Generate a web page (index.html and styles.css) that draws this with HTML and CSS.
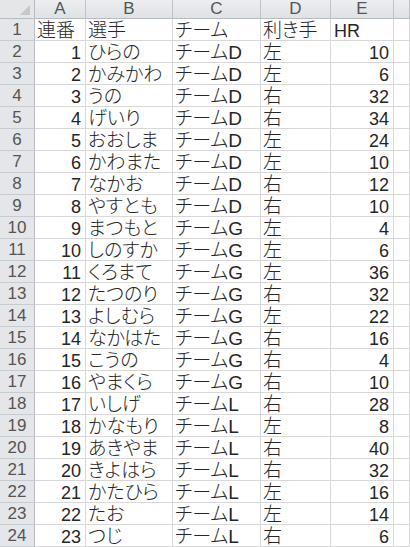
FILE: index.html
```html
<!DOCTYPE html>
<html lang="ja">
<head>
<meta charset="utf-8">
<link rel="stylesheet" href="styles.css">
</head>
<body>
<div class="sheet">
  <div class="row head">
    <div class="corner"><span class="tri"></span></div>
    <div class="ch">A</div><div class="ch">B</div><div class="ch">C</div><div class="ch">D</div><div class="ch">E</div><div class="ch"></div>
  </div>
  <div class="row"><div class="rh">1</div><div class="c">連番</div><div class="c">選手</div><div class="c">チーム</div><div class="c">利き手</div><div class="c latin">HR</div><div class="c"></div></div>
  <div class="row"><div class="rh">2</div><div class="c n">1</div><div class="c">ひらの</div><div class="c">チームD</div><div class="c">左</div><div class="c n">10</div><div class="c"></div></div>
  <div class="row"><div class="rh">3</div><div class="c n">2</div><div class="c">かみかわ</div><div class="c">チームD</div><div class="c">左</div><div class="c n">6</div><div class="c"></div></div>
  <div class="row"><div class="rh">4</div><div class="c n">3</div><div class="c">うの</div><div class="c">チームD</div><div class="c">右</div><div class="c n">32</div><div class="c"></div></div>
  <div class="row"><div class="rh">5</div><div class="c n">4</div><div class="c">げいり</div><div class="c">チームD</div><div class="c">右</div><div class="c n">34</div><div class="c"></div></div>
  <div class="row"><div class="rh">6</div><div class="c n">5</div><div class="c">おおしま</div><div class="c">チームD</div><div class="c">左</div><div class="c n">24</div><div class="c"></div></div>
  <div class="row"><div class="rh">7</div><div class="c n">6</div><div class="c">かわまた</div><div class="c">チームD</div><div class="c">左</div><div class="c n">10</div><div class="c"></div></div>
  <div class="row"><div class="rh">8</div><div class="c n">7</div><div class="c">なかお</div><div class="c">チームD</div><div class="c">右</div><div class="c n">12</div><div class="c"></div></div>
  <div class="row"><div class="rh">9</div><div class="c n">8</div><div class="c">やすとも</div><div class="c">チームD</div><div class="c">右</div><div class="c n">10</div><div class="c"></div></div>
  <div class="row"><div class="rh">10</div><div class="c n">9</div><div class="c">まつもと</div><div class="c">チームG</div><div class="c">左</div><div class="c n">4</div><div class="c"></div></div>
  <div class="row"><div class="rh">11</div><div class="c n">10</div><div class="c">しのすか</div><div class="c">チームG</div><div class="c">左</div><div class="c n">6</div><div class="c"></div></div>
  <div class="row"><div class="rh">12</div><div class="c n">11</div><div class="c">くろまて</div><div class="c">チームG</div><div class="c">左</div><div class="c n">36</div><div class="c"></div></div>
  <div class="row"><div class="rh">13</div><div class="c n">12</div><div class="c">たつのり</div><div class="c">チームG</div><div class="c">右</div><div class="c n">32</div><div class="c"></div></div>
  <div class="row"><div class="rh">14</div><div class="c n">13</div><div class="c">よしむら</div><div class="c">チームG</div><div class="c">左</div><div class="c n">22</div><div class="c"></div></div>
  <div class="row"><div class="rh">15</div><div class="c n">14</div><div class="c">なかはた</div><div class="c">チームG</div><div class="c">右</div><div class="c n">16</div><div class="c"></div></div>
  <div class="row"><div class="rh">16</div><div class="c n">15</div><div class="c">こうの</div><div class="c">チームG</div><div class="c">右</div><div class="c n">4</div><div class="c"></div></div>
  <div class="row"><div class="rh">17</div><div class="c n">16</div><div class="c">やまくら</div><div class="c">チームG</div><div class="c">右</div><div class="c n">10</div><div class="c"></div></div>
  <div class="row"><div class="rh">18</div><div class="c n">17</div><div class="c">いしげ</div><div class="c">チームL</div><div class="c">右</div><div class="c n">28</div><div class="c"></div></div>
  <div class="row"><div class="rh">19</div><div class="c n">18</div><div class="c">かなもり</div><div class="c">チームL</div><div class="c">左</div><div class="c n">8</div><div class="c"></div></div>
  <div class="row"><div class="rh">20</div><div class="c n">19</div><div class="c">あきやま</div><div class="c">チームL</div><div class="c">右</div><div class="c n">40</div><div class="c"></div></div>
  <div class="row"><div class="rh">21</div><div class="c n">20</div><div class="c">きよはら</div><div class="c">チームL</div><div class="c">右</div><div class="c n">32</div><div class="c"></div></div>
  <div class="row"><div class="rh">22</div><div class="c n">21</div><div class="c">かたひら</div><div class="c">チームL</div><div class="c">左</div><div class="c n">16</div><div class="c"></div></div>
  <div class="row"><div class="rh">23</div><div class="c n">22</div><div class="c">たお</div><div class="c">チームL</div><div class="c">左</div><div class="c n">14</div><div class="c"></div></div>
  <div class="row"><div class="rh">24</div><div class="c n">23</div><div class="c">つじ</div><div class="c">チームL</div><div class="c">右</div><div class="c n">6</div><div class="c"></div></div>
</div>
</body>
</html>
```

FILE: styles.css
```css
html, body {
  margin: 0;
  padding: 0;
  background: #ffffff;
}
.sheet {
  width: 410px;
  overflow: hidden;
  font-family: "Liberation Sans", "Noto Sans CJK JP", sans-serif;
  font-feature-settings: "palt";
  font-weight: 300;
  color: #262626;
}
.row {
  display: grid;
  grid-template-columns: 35px 51px 87px 88px 70px 63px 1fr;
  height: 22px;
}
.row.head {
  height: 19px;
}
.row > div {
  box-sizing: border-box;
  border-right: 1px solid #d8d8d8;
  border-bottom: 1px solid #d8d8d8;
  overflow: hidden;
  white-space: nowrap;
}
.corner {
  position: relative;
  background: #e4e6e8;
  border-right: 1px solid #b8bcc0 !important;
  border-bottom: 1px solid #b8bcc0 !important;
}
.tri {
  position: absolute;
  right: 4px;
  bottom: 3px;
  width: 0;
  height: 0;
  border-left: 10px solid transparent;
  border-bottom: 10px solid #c4c8cc;
}
.ch {
  background: linear-gradient(#eceef0, #dfe2e5);
  border-right: 1px solid #bfc3c7 !important;
  border-bottom: 1px solid #b8bcc0 !important;
  color: #555;
  font-size: 17px;
  line-height: 18px;
  text-align: center;
}
.rh {
  background: #e4e6e9;
  border-right: 1px solid #b8bcc0 !important;
  border-bottom: 1px solid #c8ccd0 !important;
  color: #555;
  font-size: 17px;
  line-height: 21px;
  text-align: center;
}
.c {
  font-size: 19px;
  line-height: 18px;
  padding: 3px 3px 0 2px;
}
.c.latin {
  font-size: 18px;
  padding-left: 3px;
}
.c.n {
  font-size: 18px;
  text-align: right;
  padding-right: 4px;
}
```
